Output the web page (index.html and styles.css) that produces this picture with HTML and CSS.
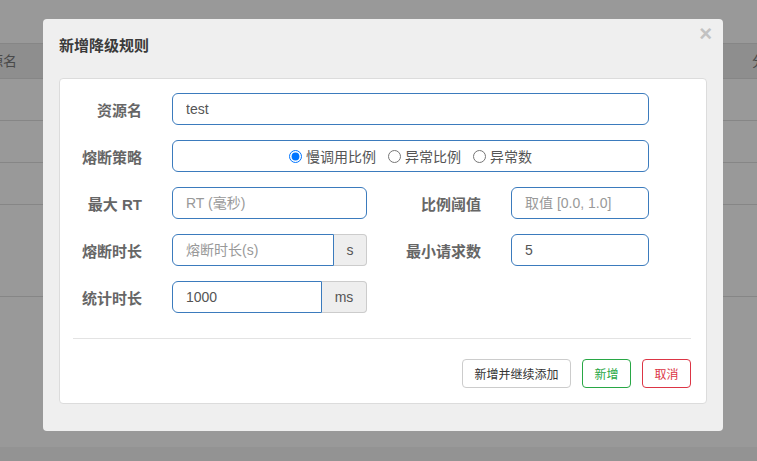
FILE: index.html
```html
<!DOCTYPE html>
<html lang="zh">
<head>
<meta charset="utf-8">
<title>新增降级规则</title>
<link rel="stylesheet" href="styles.css">
</head>
<body>
<div class="page">
  <div class="table">
    <div class="trow thead"><span class="c1">资源名</span><span class="c2">分</span></div>
    <div class="trow"></div>
    <div class="trow"></div>
    <div class="trow"></div>
    <div class="trow tall"></div>
  </div>
  <div class="page-foot"></div>
</div>

<div class="modal">
  <div class="modal-header">
    <h4 class="modal-title">新增降级规则</h4>
    <span class="close">×</span>
  </div>
  <div class="panel">
    <form class="form">
      <label class="lbl">资源名</label>
      <input class="ctl wide" type="text" value="test">

      <label class="lbl">熔断策略</label>
      <div class="ctl wide radios">
        <label class="radio"><input type="radio" name="s" checked>慢调用比例</label>
        <label class="radio"><input type="radio" name="s">异常比例</label>
        <label class="radio"><input type="radio" name="s">异常数</label>
      </div>

      <label class="lbl">最大 RT</label>
      <input class="ctl" type="text" placeholder="RT (毫秒)">
      <label class="lbl">比例阈值</label>
      <input class="ctl" type="text" placeholder="取值 [0.0, 1.0]">

      <label class="lbl">熔断时长</label>
      <div class="group">
        <input class="ctl" type="text" placeholder="熔断时长(s)">
        <span class="addon s">s</span>
      </div>
      <label class="lbl">最小请求数</label>
      <input class="ctl" type="text" value="5">

      <label class="lbl">统计时长</label>
      <div class="group">
        <input class="ctl" type="text" value="1000">
        <span class="addon ms">ms</span>
      </div>
    </form>
    <div class="divider"></div>
    <div class="footer">
      <button class="btn first">新增并继续添加</button>
      <button class="btn green">新增</button>
      <button class="btn red">取消</button>
    </div>
  </div>
</div>
</body>
</html>
```

FILE: styles.css
```css
* { box-sizing: border-box; }
html, body { margin: 0; padding: 0; }
body {
  width: 757px;
  height: 461px;
  overflow: hidden;
  background: #999999;
  font-family: "Liberation Sans", "Noto Sans CJK SC", sans-serif;
  color: #555;
  position: relative;
}

.page { padding-top: 43px; height: 461px; display: flex; flex-direction: column; }
.table { border-top: 1px solid #868686; }
.trow {
  height: 42px;
  border-bottom: 1px solid #868686;
  position: relative;
}
.thead {
  height: 35px;
  background: #8e8e8e;
  font-size: 14px;
  color: #4a4a4a;
  line-height: 34px;
  white-space: nowrap;
}
.thead .c1 { position: absolute; left: -25px; }
.thead .c2 { position: absolute; left: 752px; }
.tall { height: 92px; }
.page-foot { margin-top: auto; height: 14px; background: #939393; }

.modal {
  position: absolute;
  left: 43px;
  top: 19px;
  width: 680px;
  height: 412px;
  background: #efefef;
  border-radius: 4px;
  padding: 0 16px;
}
.modal-header { height: 59px; padding-top: 17px; position: relative; }
.modal-title {
  margin: 0;
  font-size: 15px;
  line-height: 20px;
  font-weight: bold;
  color: #3a3a3a;
}
.close {
  position: absolute;
  right: -5px;
  top: 3px;
  font-size: 22px;
  font-weight: bold;
  color: #c2c2c2;
  line-height: 24px;
}

.panel {
  background: #fff;
  border: 1px solid #dcdcdc;
  border-radius: 4px;
  height: 326px;
  padding-top: 14px;
}
.form {
  display: grid;
  grid-template-columns: 82px 195px 84px 138px;
  column-gap: 30px;
  row-gap: 15px;
  align-items: center;
}
.lbl {
  text-align: right;
  font-weight: bold;
  font-size: 15px;
  color: #666;
  white-space: nowrap;
}
.ctl {
  height: 32px;
  border: 1px solid #3b7bbd;
  border-radius: 6px;
  padding: 0 13px;
  font-family: "Liberation Sans", "Noto Sans CJK SC", sans-serif;
  font-size: 14px;
  color: #555;
  background: #fff;
  outline: none;
  width: 100%;
}
.ctl::placeholder { color: #999; }
.wide { grid-column: 2 / 5; }
.radios {
  display: flex;
  justify-content: center;
  align-items: center;
  gap: 12px;
  padding: 0;
}
.radio {
  display: flex;
  align-items: center;
  font-size: 14px;
  color: #555;
  white-space: nowrap;
}
.radio input { margin: 0 4px 0 0; width: 13px; height: 13px; }
.group { display: flex; }
.group .ctl { border-radius: 6px 0 0 6px; }
.addon {
  flex: none;
  height: 32px;
  border: 1px solid #ccc;
  border-left: none;
  border-radius: 0 4px 4px 0;
  background: #eee;
  font-size: 14px;
  color: #555;
  display: flex;
  align-items: center;
  justify-content: center;
}
.addon.s { width: 33px; }
.addon.ms { width: 45px; }

.divider {
  margin: 25px 15px 0 13px;
  border-top: 1px solid #e3e3e3;
}
.footer {
  display: flex;
  justify-content: flex-end;
  gap: 11px;
  margin: 20px 15px 0 0;
}
.btn {
  height: 29px;
  padding: 0;
  white-space: nowrap;
  background: #fff;
  border: 1px solid #ccc;
  border-radius: 4px;
  font-family: "Liberation Sans", "Noto Sans CJK SC", sans-serif;
  font-size: 12px;
  color: #333;
}
.btn.first { width: 109px; }
.btn.green { border-color: #28a745; color: #28a745; width: 49px; }
.btn.red { border-color: #dc3545; color: #dc3545; width: 49px; }
```
